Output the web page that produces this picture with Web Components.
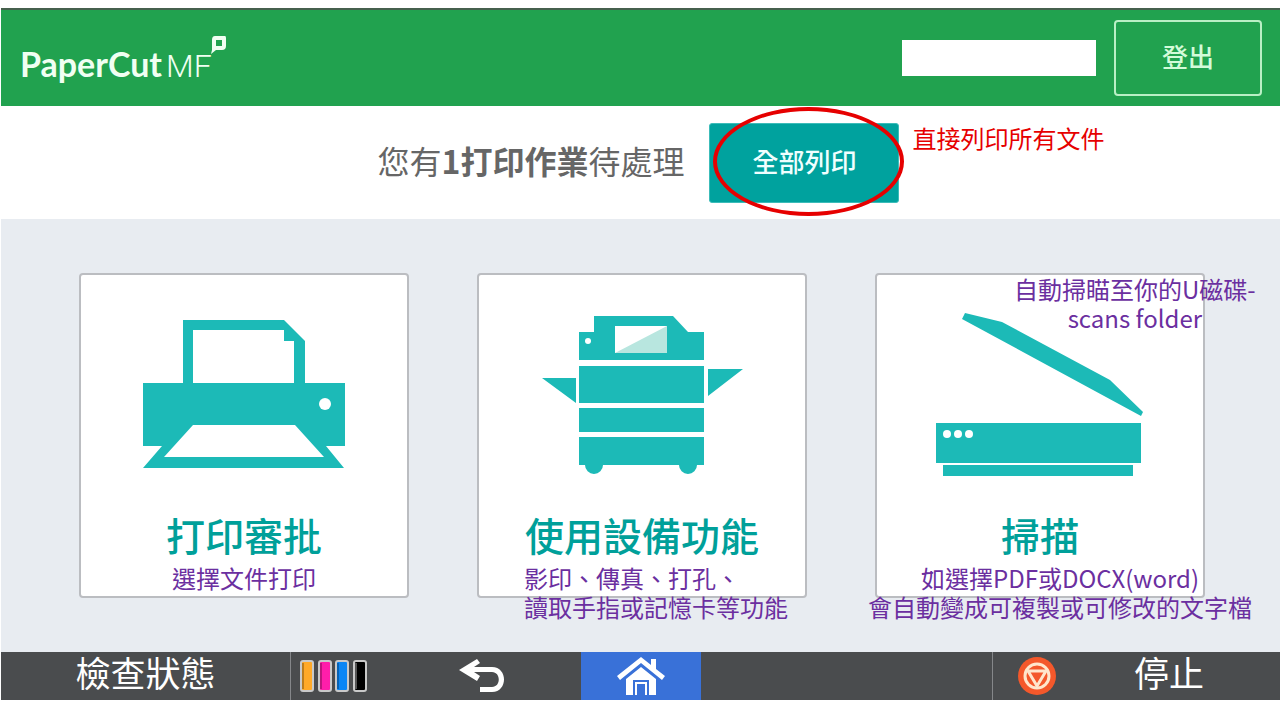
<!DOCTYPE html>
<html lang="zh-Hant">
<head>
<meta charset="utf-8">
<meta name="viewport" content="width=device-width, initial-scale=1">
<title>PaperCut MF</title>
<style>
  body { margin: 0; background: #fff; font-family: "Noto Sans CJK TC", "Noto Sans", sans-serif; }
</style>
</head>
<body>
<mf-screen>
  <mf-header slot="header">登出</mf-header>
  <mf-banner slot="banner">
    您有<b>1打印作業</b>待處理
    <span slot="action">全部列印</span>
    <mf-note slot="note" tone="red">直接列印所有文件</mf-note>
  </mf-banner>
  <mf-card icon="printer">打印審批
    <mf-note slot="below">選擇文件打印</mf-note>
  </mf-card>
  <mf-card icon="copier" style="--below-shift: 28px">使用設備功能
    <mf-note slot="below" align="start">影印、傳真、打孔、<br>讀取手指或記憶卡等功能</mf-note>
  </mf-card>
  <mf-card icon="scanner" style="--below-shift: 40px">掃描
    <mf-note slot="above">自動掃瞄至你的U磁碟-<br>scans folder</mf-note>
    <mf-note slot="below">如選擇PDF或DOCX(word)<br>會自動變成可複製或可修改的文字檔</mf-note>
  </mf-card>
  <mf-toolbar slot="footer">
    <span slot="status">檢查狀態</span>
    <span slot="stop">停止</span>
  </mf-toolbar>
</mf-screen>

<script>
const define = (name, render) => customElements.define(name, class extends HTMLElement {
  constructor() {
    super();
    this.attachShadow({ mode: 'open' }).innerHTML = render(this);
  }
});

const icons = {
  printer: `
    <path fill-rule="evenodd" d="M44 10H145L166 31V73H206V136H187L205 158H4L23 136H4V73H44ZM54 20V73H155V31H145V20ZM54 115L25 147H185L156 115Z"/>
    <circle class="light" cx="186" cy="94" r="6"/>`,
  copier: `
    <path d="M57 6H136L151 22H167V50H42V22H57ZM42 56H167V93H42ZM42 98H167V122H42ZM42 127H167V155H160A9 9 0 0 1 142 155H66A9 9 0 0 1 48 155H42ZM5 68H39V93ZM171 59H206L171 86Z"/>
    <path class="light" d="M78 16H130V43H78Z"/>
    <path class="tint" d="M130 16V43H78Z"/>
    <circle class="light" cx="51" cy="31" r="3"/>`,
  scanner: `
    <path d="M30 3L67 12L175 70L208 102L206 106L27 9ZM1 113H206V153H1ZM8 155H198V166H8Z"/>
    <g class="light"><circle cx="12" cy="124" r="4"/><circle cx="23" cy="124" r="4"/><circle cx="34" cy="124" r="4"/></g>`
};

define('mf-screen', () => `
  <style>
    :host { display: block; margin: 8px 0 0 1px; }
    main { display: grid; grid-template-columns: repeat(3, minmax(0, 1fr)); gap: 68px; padding: 54px 75px 54px 78px; background: #e8ecf1; }
  </style>
  <slot name="header"></slot>
  <slot name="banner"></slot>
  <main><slot></slot></main>
  <slot name="footer"></slot>`);

define('mf-header', () => `
  <style>
    :host { display: block; }
    header { display: flex; align-items: center; gap: 18px; box-sizing: border-box; height: 98px; padding: 0 18px 0 19px; border-top: 2px solid #46604d; background: #21a24f; }
    .logo { position: relative; display: flex; align-items: baseline; gap: 4px; margin: 14px auto 0 0; color: #f0fff2; font: 700 34px/40px Lato, sans-serif; text-decoration: none; }
    .logo i { font: 300 32px/40px Roboto, sans-serif; }
    .logo svg { position: absolute; left: 100%; bottom: 31px; margin-left: -2px; }
    .user { width: 194px; height: 36px; background: #fff; }
    button { width: 148px; height: 76px; padding: 0 0 4px; border: 2px solid #b9f0c5; border-radius: 4px; background: none; color: #d3fbd9; font: 500 26px/36px "Noto Sans CJK TC", sans-serif; }
  </style>
  <header>
    <a class="logo" href="#"><span>PaperCut</span><i>MF</i>
      <svg width="18" height="20" viewBox="0 0 18 20" aria-hidden="true"><path fill="#f0fff2" fill-rule="evenodd" d="M5 1H15Q16 1 16 3V11Q16 15 12 15H6L1 19L2 15V5Q2 1 5 1ZM6 5V11H12V5Z"/></svg>
    </a>
    <div class="user"></div>
    <button type="button"><slot></slot></button>
  </header>`);

define('mf-banner', () => `
  <style>
    :host { display: block; }
    section { display: flex; align-items: center; justify-content: center; gap: 25px; padding: 17px 4px 16px 0; background: #fff; }
    p { margin: 0 0 6px; color: #666; font-size: 32px; line-height: 46px; }
    .action { position: relative; }
    button { display: block; width: 190px; height: 80px; padding: 0 0 4px; border: 1px solid #3cbcb9; border-radius: 3px; background: #00a29e; color: #f0ffff; font: 500 26px/36px "Noto Sans CJK TC", sans-serif; }
    .ring { position: absolute; inset: -16px -5px -13px 4px; border: 4px solid #e60000; border-radius: 50%; pointer-events: none; }
    .note { position: absolute; left: 203px; top: 0; }
  </style>
  <section>
    <p><slot></slot></p>
    <div class="action">
      <button type="button"><slot name="action"></slot></button>
      <div class="ring"></div>
      <div class="note"><slot name="note"></slot></div>
    </div>
  </section>`);

define('mf-note', () => `
  <style>
    :host { display: block; color: #6b2fa0; font-size: 24px; line-height: 29px; text-align: center; white-space: nowrap; }
    :host([align="start"]) { text-align: start; }
    :host([tone="red"]) { color: #e60000; }
  </style>
  <slot></slot>`);

define('mf-card', el => `
  <style>
    :host { display: block; position: relative; }
    button { display: flex; flex-direction: column; align-items: center; gap: 31px; box-sizing: border-box; width: 100%; height: 325px; padding: 35px 0 0; border: 2px solid #bbbdc1; border-radius: 4px; background: #fff; color: #00a09a; font: 500 39px/46px "Noto Sans CJK TC", sans-serif; }
    svg { flex: none; fill: #1cbab7; }
    .light { fill: #fff; }
    .tint { fill: #b8e6df; }
    .above, .below { position: absolute; display: flex; justify-content: center; }
    .below { inset: 290px 0 auto var(--below-shift, 0); }
    .above { left: 139px; top: 1px; }
  </style>
  <button type="button">
    <svg width="210" height="170" viewBox="0 0 210 170" aria-hidden="true">${icons[el.getAttribute('icon')]}</svg>
    <span><slot></slot></span>
  </button>
  <div class="above"><slot name="above"></slot></div>
  <div class="below"><slot name="below"></slot></div>`);

define('mf-toolbar', () => `
  <style>
    :host { display: block; }
    nav { display: grid; grid-template-columns: 289fr 291fr 120fr 291fr 288fr; height: 48px; background: #4a4c4e; }
    button { display: flex; align-items: center; justify-content: center; padding: 0; border: 0; background: none; color: #fff; font: 400 35px/40px "Noto Sans CJK TC", sans-serif; }
    svg { flex: none; display: block; }
    .label { padding-bottom: 8px; }
    .supplies { display: flex; align-items: center; gap: 92px; border-left: 1px solid #85878a; padding-left: 9px; }
    .home { background: #3971d8; }
    .stop { grid-column: 5; justify-content: flex-start; gap: 78px; padding-left: 25px; border-left: 1px solid #85878a; }
  </style>
  <nav>
    <button type="button"><span class="label"><slot name="status"></slot></span></button>
    <div class="supplies">
      <svg width="67" height="32" viewBox="0 0 67 32" aria-hidden="true" stroke="#c9c9c9" stroke-width="2">
        <rect x="1" y="1" width="12" height="30" rx="2" fill="#ffa928"/><rect x="19" y="1" width="12" height="30" rx="2" fill="#ff1eaa"/><rect x="36" y="1" width="12" height="30" rx="2" fill="#0a86f5"/><rect x="54" y="1" width="12" height="30" rx="2" fill="#000"/>
        <path stroke="#0004" d="M3 3V29M21 3V29M38 3V29"/><path stroke="#555" d="M56 3V29"/>
      </svg>
      <button type="button" aria-label="返回">
        <svg width="46" height="34" viewBox="0 0 46 34" aria-hidden="true"><path fill="#fff" d="M0 11L18 0L21 4L15 8H33C49 8 49 33 33 33H21V28H33C42 28 42 13 33 13H15L21 17L18 22Z"/></svg>
      </button>
    </div>
    <button class="home" type="button" aria-label="主頁">
      <svg width="48" height="38" viewBox="0 0 48 38" aria-hidden="true"><path fill="#fff" d="M24 0L34 8V2H39V12L48 19L45 23L24 6L3 23L0 19Z"/><path fill="#fff" fill-rule="evenodd" d="M24 10L39 22V38H9V22ZM16 23V38H18V25H30V38H32V23Z"/><path fill="#3971d8" d="M20 27H28V38H20Z"/></svg>
    </button>
    <button class="stop" type="button">
      <svg width="38" height="38" viewBox="0 0 38 38" aria-hidden="true"><circle cx="19" cy="19" r="19" fill="#f4582b"/><g fill="none" stroke="#ffe6cc" stroke-width="3"><circle cx="19" cy="19" r="12"/><path stroke-linejoin="round" d="M10 14H28L19 29Z"/></g></svg>
      <span class="label"><slot name="stop"></slot></span>
    </button>
  </nav>`);
</script>
</body>
</html>
